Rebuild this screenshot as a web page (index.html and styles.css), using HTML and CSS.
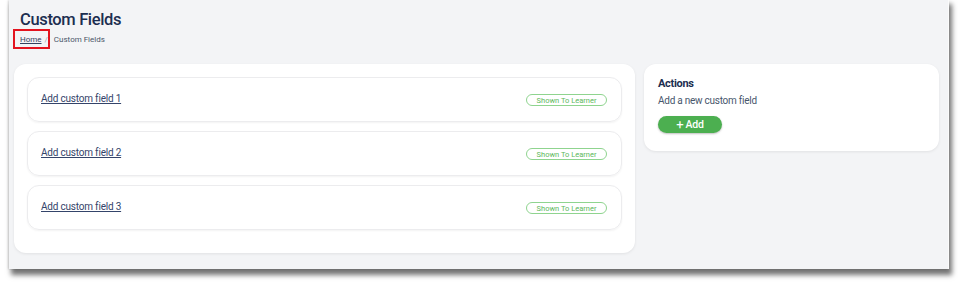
FILE: index.html
```html
<!DOCTYPE html>
<html>
<head>
<meta charset="utf-8">
<link rel="stylesheet" href="styles.css">
</head>
<body>
<div class="frame">
  <header class="page-head">
    <h1 class="title">Custom Fields</h1>
    <nav class="crumbs">
      <a class="crumb-home" href="#">Home</a>
      <span class="sep">/</span>
      <span class="crumb-current">Custom Fields</span>
    </nav>
    <span class="highlight"></span>
  </header>
  <main class="layout">
    <section class="card list-card">
      <div class="row">
        <a class="row-link" href="#">Add custom field 1</a>
        <span class="badge">Shown To Learner</span>
      </div>
      <div class="row">
        <a class="row-link" href="#">Add custom field 2</a>
        <span class="badge">Shown To Learner</span>
      </div>
      <div class="row">
        <a class="row-link" href="#">Add custom field 3</a>
        <span class="badge">Shown To Learner</span>
      </div>
    </section>
    <aside class="card actions-card">
      <h2 class="actions-title">Actions</h2>
      <p class="actions-text">Add a new custom field</p>
      <button class="add-btn"><span class="plus">+</span> Add</button>
    </aside>
  </main>
</div>
</body>
</html>
```
FILE: styles.css
```css
html, body {
  margin: 0;
  padding: 0;
  background: #ffffff;
  font-family: Roboto, "Liberation Sans", Arial, sans-serif;
}
body {
  min-height: 287px;
  padding-bottom: 18px;
  box-sizing: border-box;
}
.frame {
  margin-left: 9px;
  width: 939px;
  height: 269px;
  background: #f3f4f6;
  box-shadow: 1px 0 0 #fbfbfb, 3px 5px 5px 1px rgba(0, 0, 0, 0.55), -1px 0 2px rgba(0, 0, 0, 0.15);
  box-sizing: border-box;
  padding: 0 9px 0 5px;
}
.page-head {
  position: relative;
  padding: 10px 0 0 6px;
  height: 64px;
  box-sizing: border-box;
}
.title {
  margin: 0;
  font-size: 16.5px;
  letter-spacing: -0.35px;
  font-weight: 500;
  color: #1c2e50;
  line-height: 20px;
}
.crumbs {
  display: flex;
  align-items: center;
  font-size: 8px;
  font-weight: 400;
  color: #4a5568;
  margin-top: 5px;
  line-height: 10px;
}
.crumb-home {
  color: #34425e;
  text-decoration: underline;
}
.sep {
  color: #a0a8b4;
  margin: 0 6px 0 3px;
}
.highlight {
  position: absolute;
  left: -1px;
  top: 29px;
  width: 37px;
  height: 20px;
  box-sizing: border-box;
  border: 2px solid #e3141f;
}
.layout {
  display: grid;
  grid-template-columns: 621px 295px;
  column-gap: 9px;
  align-items: start;
}
.card {
  background: #ffffff;
  border-radius: 12px;
  box-shadow: 0 1px 3px rgba(0, 0, 0, 0.08);
  box-sizing: border-box;
}
.list-card {
  height: 189px;
  padding: 13px 13px;
  display: flex;
  flex-direction: column;
  gap: 9px;
}
.row {
  height: 45px;
  box-sizing: border-box;
  border: 1px solid #ececee;
  border-radius: 12px;
  box-shadow: 0 1px 2px rgba(0, 0, 0, 0.05);
  display: flex;
  align-items: center;
  justify-content: space-between;
  padding: 0 14px 0 13px;
}
.row-link {
  font-size: 10px;
  letter-spacing: -0.2px;
  color: #34446a;
  text-decoration: underline;
  margin-top: -2px;
}
.badge {
  width: 81px;
  height: 12px;
  box-sizing: border-box;
  border: 1px solid #8fd48f;
  border-radius: 7px;
  color: #5cb85c;
  font-size: 7.5px;
  display: flex;
  align-items: center;
  justify-content: center;
  margin-top: 1px;
}
.actions-card {
  height: 87px;
  padding: 14px 14px;
}
.actions-title {
  margin: 0;
  font-size: 11px;
  letter-spacing: -0.3px;
  font-weight: 700;
  color: #1c2e50;
  line-height: 12px;
}
.actions-text {
  margin: 5px 0 0 0;
  font-size: 10px;
  letter-spacing: -0.25px;
  color: #48566c;
  line-height: 12px;
}
.add-btn {
  margin-top: 9px;
  width: 64px;
  height: 17px;
  border: none;
  border-radius: 9px;
  background: #4caf50;
  color: #ffffff;
  font-family: Roboto, "Liberation Sans", Arial, sans-serif;
  font-size: 10.5px;
  letter-spacing: -0.2px;
  font-weight: 500;
  display: flex;
  align-items: center;
  justify-content: center;
  padding: 0;
  box-shadow: 0 1px 2px rgba(0, 0, 0, 0.25);
}
.plus {
  font-size: 13px;
  font-weight: 400;
  margin-right: 2px;
  line-height: 13px;
}
```
